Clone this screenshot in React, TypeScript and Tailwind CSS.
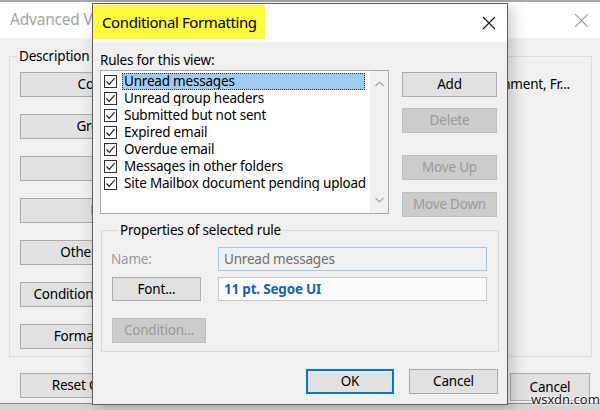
import React from "react";

const F = "font-['Noto_Sans',_'Open_Sans',_sans-serif]";

function Check() {
  return (
    <span className="w-[13px] h-[13px] border border-[#333] bg-white flex items-center justify-center shrink-0">
      <svg width="11" height="11" viewBox="0 0 11 11">
        <path d="M1.5 5.5 L4.3 8.4 L9.6 2.2" fill="none" stroke="#222" strokeWidth="1.2" />
      </svg>
    </span>
  );
}

function XIcon({ color, size }: { color: string; size: number }) {
  return (
    <svg width={size} height={size} viewBox="0 0 14 14">
      <path d="M1 1 L13 13 M13 1 L1 13" stroke={color} strokeWidth="1.1" fill="none" />
    </svg>
  );
}

const rules = [
  "Unread messages",
  "Unread group headers",
  "Submitted but not sent",
  "Expired email",
  "Overdue email",
  "Messages in other folders",
  "Site Mailbox document pending upload",
];

const bgButtons = [
  "Columns...",
  "Group By...",
  "Sort...",
  "Filter...",
  "Other Settings...",
  "Conditional Formatting...",
  "Format Columns...",
];

export default function App() {
  return (
    <div className={`relative w-[600px] h-[410px] overflow-hidden bg-[#d4d4d4] ${F} text-[13.5px] tracking-[-0.2px] text-black`}>
      {/* Background window */}
      <div className="h-[404px] bg-[#f0f0f0] border-t-2 border-[#a8a8a8] border-b border-b-[#8a8a8a] flex flex-col">
        <div className="h-[36px] bg-white flex items-center justify-between pl-[10px] pr-[11px]">
          <span className="text-[15.5px] text-[#a5a5a5] leading-none">Advanced View</span>
          <XIcon color="#9a9a9a" size={15} />
        </div>
        <fieldset className="ml-[9px] mr-[8px] mt-[9px] h-[310px] border border-[#dcdcdc] flex flex-col">
          <legend className="ml-[7px] px-[2px] leading-[18px]">Description</legend>
          <div className="flex flex-col gap-[17px] mt-[7px] pl-[10px]">
            {bgButtons.map((b, i) => (
              <div key={b} className="flex items-center">
                <div className="w-[180px] h-[25px] bg-[#e1e1e1] border border-[#adadad] flex items-center justify-center whitespace-nowrap">
                  {b}
                </div>
                {i === 0 && (
                  <div className="flex-1 flex justify-end pr-[21px] whitespace-nowrap overflow-hidden">
                    Attachment, Fr...
                  </div>
                )}
              </div>
            ))}
          </div>
        </fieldset>
        <div className="flex items-start justify-between mt-[16px] pl-[20px] pr-[10px]">
          <div className="w-[180px] h-[25px] bg-[#e1e1e1] border border-[#adadad] flex items-center justify-center">
            Reset Current View
          </div>
          <div className="w-[80px] h-[28px] bg-[#e1e1e1] border border-[#adadad] flex items-start pt-[3px] justify-center">
            Cancel
          </div>
        </div>
      </div>

      {/* Front dialog */}
      <div className="absolute left-[92px] top-[3px] w-[416px] h-[402px] border border-[#5f5f5f] bg-[#f0f0f0] shadow-[4px_4px_14px_rgba(0,0,0,0.22)] flex flex-col">
        <div className="h-[38px] bg-white flex items-start justify-between">
          <div className="mt-[1px] w-[172px] h-[34px] bg-[#fdfb3e] flex items-center pl-[9px] text-[15px] tracking-[-0.4px] whitespace-nowrap">
            Conditional Formatting
          </div>
          <div className="mt-[12px] mr-[11px]">
            <XIcon color="#111" size={14} />
          </div>
        </div>
        <div className="pl-[7px] flex flex-col">
          <div className="mt-[9px] leading-[18px]">Rules for this view:</div>
          <div className="flex h-[148px]">
            <div className="mt-[1px] w-[289px] h-[144px] bg-white border border-[#a9a9a9] flex">
              <div className="flex-1 min-w-0 overflow-hidden flex flex-col pt-[2px] pl-[3px]">
                {rules.map((r, i) => (
                  <div key={r} className="h-[17px] flex items-center">
                    <Check />
                    <span
                      className={`ml-[5px] h-[17px] leading-[15px] whitespace-nowrap overflow-hidden pl-[1px] ${
                        i === 0
                          ? "w-[243px] shrink-0 bg-[#9fcbf0] border border-dotted border-[#333]"
                          : "border border-transparent"
                      }`}
                    >
                      {r}
                    </span>
                  </div>
                ))}
              </div>
              <div className="w-[18px] shrink-0 bg-[#f0f0f0] flex flex-col items-center justify-between py-[10px]">
                <svg width="9" height="6" viewBox="0 0 9 6">
                  <path d="M0.5 5 L4.5 1 L8.5 5" fill="none" stroke="#a6a6a6" strokeWidth="1.2" />
                </svg>
                <svg width="9" height="6" viewBox="0 0 9 6">
                  <path d="M0.5 1 L4.5 5 L8.5 1" fill="none" stroke="#a6a6a6" strokeWidth="1.2" />
                </svg>
              </div>
            </div>
            <div className="ml-[13px] mt-[3px] flex flex-col w-[95px]">
              <div className="h-[25px] bg-[#e1e1e1] border border-[#adadad] flex items-center justify-center">Add</div>
              <div className="mt-[11px] h-[25px] bg-[#cccccc] border border-[#bfbfbf] text-[#9a9a9a] flex items-center justify-center">Delete</div>
              <div className="mt-[22px] h-[25px] bg-[#cccccc] border border-[#bfbfbf] text-[#9a9a9a] flex items-center justify-center">Move Up</div>
              <div className="mt-[12px] h-[25px] bg-[#cccccc] border border-[#bfbfbf] text-[#9a9a9a] flex items-center justify-center">Move Down</div>
            </div>
          </div>
          <fieldset className="ml-[1px] mt-[4px] w-[398px] h-[131px] border border-[#dadada] flex flex-col pl-[9px]">
            <legend className="ml-[7px] px-[2px] leading-[18px]">Properties of selected rule</legend>
            <div className="mt-[8px] flex items-center">
              <div className="w-[107px] text-[#9b9b9b]">Name:</div>
              <div className="w-[269px] h-[24px] border border-[#a8c6e6] bg-[#f0f0f0] text-[#6f6f6f] flex items-center pl-[5px]">
                Unread messages
              </div>
            </div>
            <div className="mt-[6px] flex items-center">
              <div className="ml-[1px] w-[89px] h-[24px] bg-[#e1e1e1] border border-[#adadad] flex items-center justify-center">Font...</div>
              <div className="ml-[17px] w-[269px] h-[24px] border border-[#c8c8c8] bg-[#fbfbfb] text-[#1e62a8] font-bold flex items-center pl-[5px]">
                11 pt. Segoe UI
              </div>
            </div>
            <div className="mt-[17px] ml-[1px] w-[94px] h-[25px] bg-[#cccccc] border border-[#bfbfbf] text-[#9a9a9a] flex items-center justify-center">
              Condition...
            </div>
          </fieldset>
          <div className="mt-[17px] flex justify-end pr-[9px] gap-[15px]">
            <div className="w-[88px] h-[25px] bg-[#e1e1e1] border-2 border-[#0078d7] flex items-center justify-center">OK</div>
            <div className="w-[89px] h-[25px] bg-[#e1e1e1] border border-[#adadad] flex items-center justify-center">Cancel</div>
          </div>
        </div>
      </div>

      <div className="absolute left-[531px] top-[391px] text-[13px] tracking-normal text-[#222] leading-[16px] [text-shadow:0_0_2px_#fff,0_0_2px_#fff,0_0_3px_#fff]">
        wsxdn.com
      </div>
    </div>
  );
}
